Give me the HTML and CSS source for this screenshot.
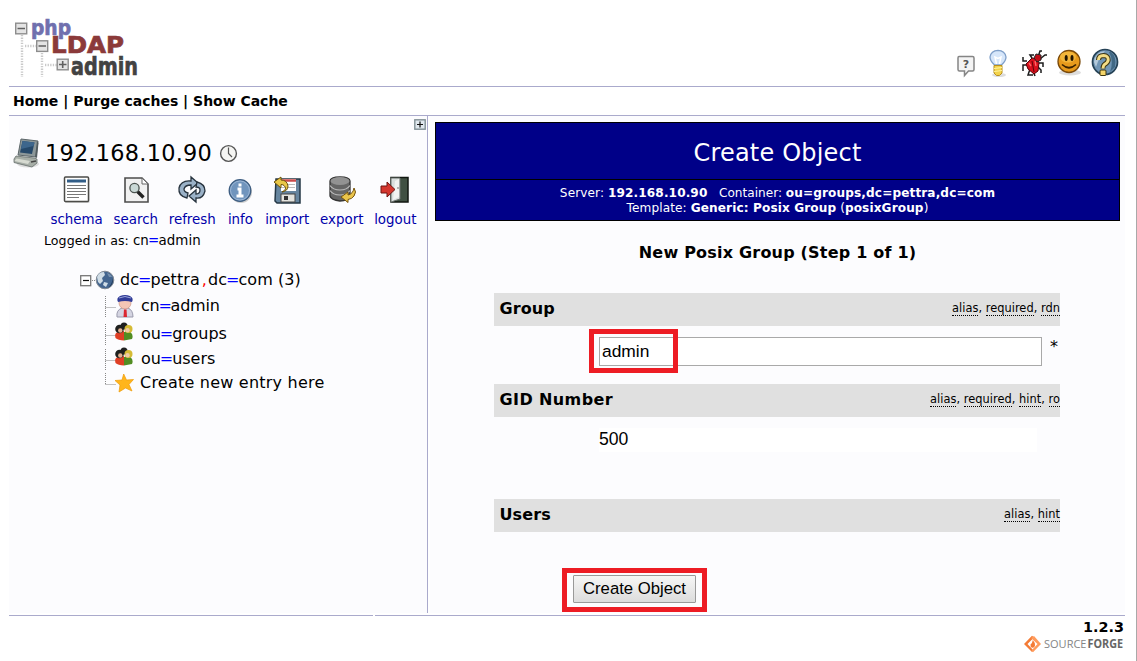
FILE: index.html
```html
<!DOCTYPE html>
<html lang="en">
<head>
<meta charset="utf-8">
<title>phpLDAPadmin</title>
<link rel="stylesheet" href="styles.css">
</head>
<body>
<div class="page">
  <header class="top">
    <svg class="logo" width="130" height="66" viewBox="0 0 130 66">
      <g stroke="#c9c9c9" stroke-width="2.4" stroke-dasharray="1.3 1.3" fill="none">
        <path d="M9 18V60"/><path d="M29 36V60"/><path d="M12 29H23"/><path d="M32 48H44"/>
      </g>
      <g fill="#e4e4e4" stroke="#8d8d8d" stroke-width="1.4">
        <rect x="2.700" y="6.200" width="11" height="10.600"/><rect x="23.700" y="23.800" width="11" height="10.600"/><rect x="44.200" y="42.200" width="11" height="10.600"/>
      </g>
      <path d="M4.500 11.500H12M25.500 29H33M46 47.500H53.500M49.700 44V51" stroke="#606060" stroke-width="1.600"/>
      <g class="logo-text">
        <text x="18" y="17.500" fill="#7070ae" stroke="#7070ae" font-size="20.500" textLength="40" lengthAdjust="spacingAndGlyphs">php</text>
        <text x="38" y="36" fill="#8b3a3a" stroke="#8b3a3a" font-size="23.500" textLength="73" lengthAdjust="spacingAndGlyphs">LDAP</text>
        <text x="58" y="57.500" fill="#424242" stroke="#424242" font-size="24.500" textLength="67" lengthAdjust="spacingAndGlyphs">admin</text>
      </g>
    </svg>
    <nav class="tools">
      <svg width="20" height="22" viewBox="0 0 20 22"><path d="M3 1.500H16.500Q18 1.500 18 3V14.500Q18 16 16.500 16H12.500L8.500 20.500V16H3.500Q2 16 2 14.500V3Q2 1.500 3 1.500Z" fill="#f4f4f4" stroke="#858585" stroke-width="1.500"/><text x="6.800" y="13" class="q">?</text></svg>
      <svg width="20" height="29" viewBox="0 0 20 29"><ellipse cx="11" cy="26" rx="7" ry="2" fill="#ddd"/><path d="M6.500 16Q2 12 2 8Q3 1.500 10 1.300Q17 1.500 18 8Q18 12 13.500 16Z" fill="#d6e6fa" stroke="#7f9fc9" stroke-width="1.3"/><path d="M8.500 15L7 8L10 9.500L13 8L11.500 15" fill="none" stroke="#fff" stroke-width="1.5"/><path d="M6 16.500H14V24L11.500 26.500H8.500L6 24Z" fill="#f3d34b" stroke="#b9901f"/><path d="M6 19.500L14 18.500M6 22.500L14 21.500" stroke="#fff3a0" stroke-width="1.200"/></svg>
      <svg width="28" height="28" viewBox="0 0 28 28"><path d="M8 12L4 12V8M9 16H4V22M11 20L9 26H14M14 22L16 27M13 9L11 6H15M19 8L21 2H23M21 10L26 6H28M20 14H24V18M19 18L22 21V24" stroke="#1c1c1c" stroke-width="1.500" fill="none"/><path d="M7 15L13 9L18 10L20 14L19 22L15 25L9 20Z" fill="#d80f1b" stroke="#510408"/><path d="M15 9L17 5L22 6L22 11L18 13Z" fill="#c20d17" stroke="#222"/><path d="M15 23L13 12" stroke="#5e050a"/><path d="M10 14L12 17M16 12L17 17" stroke="#ff6666" stroke-width="1.400"/></svg>
      <svg width="26" height="28" viewBox="0 0 26 28"><ellipse cx="14" cy="23.500" rx="11" ry="3" fill="#ddd"/><circle cx="13" cy="12.500" r="11" fill="#e79a1c" stroke="#7a4a0b" stroke-width="1.300"/><ellipse cx="12" cy="8" rx="8" ry="5.500" fill="#f2b53a"/><ellipse cx="10.200" cy="9" rx="1.500" ry="3" fill="#241500"/><ellipse cx="16" cy="9" rx="1.500" ry="3" fill="#241500"/><path d="M6 15.500Q13 22 20 15.500" stroke="#3b2200" stroke-width="1.700" fill="none"/></svg>
      <svg width="28" height="30" viewBox="0 0 28 30"><circle cx="14" cy="14" r="12.500" fill="#7196b5" stroke="#254256" stroke-width="1.700"/><path d="M3 14Q4 4 14 3Q8 9 5 19Z" fill="#b4cadb"/><path d="M20 4Q26 9 24 19L19 24Q23 13 18 4Z" fill="#416985"/><path d="M7.500 12Q7.500 7.500 12.500 7.500Q17.500 7.700 17.200 12Q17 14.500 13.500 16.500Q12 17.500 12 20.500" fill="none" stroke="#3d3511" stroke-width="5"/><rect x="9" y="22" width="6" height="5.500" rx="1" fill="#f4d56a" stroke="#3d3511"/><path d="M7.500 12Q7.500 7.500 12.500 7.500Q17.500 7.700 17.200 12Q17 14.500 13.500 16.500Q12 17.500 12 20.500" fill="none" stroke="#f4dd86" stroke-width="3"/></svg>
    </nav>
  </header>
  <nav class="menu">Home | Purge caches | Show Cache</nav>
  <main class="columns">
    <aside class="side">
      <svg class="expand" width="12" height="11" viewBox="0 0 12 11"><rect x=".8" y=".8" width="10.400" height="9.400" fill="#e0e8ee" stroke="#829096" stroke-width="1.400"/><path d="M3 5.500H9M6 2.500V8.500" stroke="#111" stroke-width="1.200"/></svg>
      <div class="server">
        <svg width="27" height="32" viewBox="0 0 27 32"><ellipse cx="15" cy="27" rx="11" ry="3.500" fill="#ddd"/><path d="M8 2L25 4L23 20L5 18Z" fill="#8d9899" stroke="#5c6669"/><path d="M9.500 4L21.500 5.500L19 17L7 15.500Z" fill="#26496a"/><path d="M9.500 4L21.500 5.500L20.500 9L8 12Z" fill="#3d668c"/><path d="M24 4L25.500 6L24 21L22 20Z" fill="#525c5f"/><path d="M3 19L21 21L24 22V26L19 30L1 25.500V22Z" fill="#a7aea7" stroke="#666e6c" stroke-width=".8"/><path d="M3.500 21.500L17 24L15 27L1.500 24Z" fill="#d6dad1"/><path d="M18 25L23 24" stroke="#444" stroke-width="1.300"/></svg>
        <h1>192.168.10.90</h1>
        <svg class="clock" width="19" height="19" viewBox="0 0 19 19"><circle cx="9.500" cy="9.500" r="7.900" fill="#f5f5f3" stroke="#555" stroke-width="1.400"/><path d="M9.500 3.500V9.500L13 13" fill="none" stroke="#555" stroke-width="1.200"/></svg>
      </div>
      <ul class="actions">
        <li><svg width="28" height="28" viewBox="0 0 28 28"><rect x="2" y="2" width="24.500" height="25" rx="1" fill="#cfcfcf"/><rect x="1.500" y="1" width="24" height="24.500" rx="1" fill="#fff" stroke="#4b4b48" stroke-width="1.500"/><path d="M4 5H23" stroke="#315d87" stroke-width="3"/><path d="M4 9.500H23M4 12.500H23M4 15.500H23M4 18.500H23M4 21.500H16" stroke="#777" stroke-width="1"/></svg>schema</li>
        <li><svg width="28" height="28" viewBox="0 0 28 28"><path d="M3 2H20L26 8V26H3Z" fill="#f1f1f1" stroke="#4c4c4c" stroke-width="1.600"/><path d="M20 2L26 8H20Z" fill="#fff" stroke="#666"/><path d="M15.500 15.500L21.500 21.500" stroke="#222" stroke-width="3.300"/><circle cx="12.500" cy="12" r="4.600" fill="#cad9d6" stroke="#4c5450" stroke-width="1.300"/></svg>search</li>
        <li><svg width="28" height="28" viewBox="0 0 28 28"><path d="M9 22Q0 20 1 12Q3 4 13 5V1L20 7L13 13V9Q7 9 6 13Q6 16 10 17Z" fill="#9ab1c7" stroke="#27333e" stroke-width="1.300"/><path d="M19 6Q27 8 27 15Q25 23 18 22V26L11 20L18 14V18Q22 18 22 14Q22 11 18 11Z" fill="#9ab1c7" stroke="#27333e" stroke-width="1.300"/></svg>refresh</li>
        <li><svg width="28" height="28" viewBox="0 0 28 28"><circle cx="15" cy="16" r="11" fill="#ccc"/><circle cx="14" cy="14.500" r="10.800" fill="#7195bd" stroke="#3d5d81" stroke-width="1.300"/><circle cx="14" cy="14.500" r="9.500" fill="none" stroke="#a8bfda" stroke-width=".8"/><path d="M14 7.500V10.500M11.500 13H14V19.500M10.500 20H17.500" stroke="#fff" stroke-width="3" fill="none"/></svg>info</li>
        <li><svg width="28" height="28" viewBox="0 0 28 28"><path d="M3 3H27V27H4L2 25Z" fill="#66859f" stroke="#243746" stroke-width="1.500"/><rect x="8" y="3" width="15" height="12" fill="#fff"/><path d="M8 4.500H23" stroke="#ca4b4b" stroke-width="2.500"/><path d="M9 8.500H22M9 11.500H22" stroke="#bbb"/><rect x="8" y="18" width="14" height="8" fill="#e4e4df" stroke="#444"/><rect x="11" y="20" width="4" height="4" fill="#333"/><path d="M9 16Q15 13 11 9.500Q10 8.500 8 8.500V12L1 6L8 1V4Q14 4 15 10Q15 15 9 16Z" fill="#e9c747" stroke="#6c520c"/></svg>import</li>
        <li><svg width="28" height="28" viewBox="0 0 28 28"><path d="M2 5Q2 1 12 1Q22 1 22 5V20Q20 25 12 25Q3 24 2 20Z" fill="#666" stroke="#333" stroke-width="1.300"/><ellipse cx="12" cy="5" rx="9.500" ry="4" fill="#929292"/><path d="M2 9.500Q5 14 12 14Q19 14 22 9.500M2 14.500Q5 19 12 19Q19 19 22 14.500" fill="none" stroke="#bbb" stroke-width="1.200"/><path d="M26 12Q29 16 26 20Q24 23 20 23.500V26.500L13 21L20 16V19Q25 18 26 12Z" fill="#ebc54b" stroke="#77550f"/></svg>export</li>
        <li><svg width="28" height="28" viewBox="0 0 28 28"><rect x="10" y="1.500" width="17" height="24.500" fill="#405042" stroke="#101610" stroke-width="1.500"/><path d="M10 2H19V23L10 26Z" fill="#d9dedd" stroke="#6a706d"/><path d="M14 5L18 3V21L12 24" fill="#f1f2f1"/><path d="M16 12H18" stroke="#777"/><path d="M0 10H6V6L14 13.500L6 21V17H0Z" fill="#d4362e" stroke="#6e1410"/></svg>logout</li>
      </ul>
      <p class="login"><span>Logged in as:</span> <span class="login-dn">cn<i class="eq">=</i>admin</span></p>
      <ul class="tree">
        <li class="root"><svg width="15" height="20" viewBox="0 0 15 20"><rect x=".7" y="5.700" width="10" height="10" fill="#fff" stroke="#777" stroke-width="1.300"/><path d="M3 10.500H9" stroke="#111" stroke-width="1.200"/><path d="M12 10.500H15" stroke="#888" stroke-dasharray="1 1"/></svg><svg class="pic" width="20" height="20" viewBox="0 0 20 20"><circle cx="10" cy="10" r="8.800" fill="#43658f" stroke="#838b94"/><path d="M2 7Q4 2 9 2L10 5L7 8L8 11L5 14L3 12ZM9 12L13 13L11 17L8 15Z" fill="#d0dde6"/><path d="M12 3Q16 4 17 7L14 7Z" fill="#7690ad"/><path d="M18 8Q19 15 13 18Q17 14 18 8Z" fill="#233d5e"/></svg><span>dc<i class="eq">=</i>pettra<b class="comma">,</b>dc<i class="eq">=</i>com (3)</span></li>
        <li class="child user"><svg width="11" height="21" viewBox="0 0 11 21"><path d="M.5 0V21M.5 11.500H11" stroke="#888" stroke-dasharray="1 1"/></svg><svg class="pic" width="20" height="24" viewBox="0 0 20 24"><path d="M2 23Q1 16 7 14H13Q18 16 18 23Z" fill="#d5d5e2" stroke="#9a9aac"/><circle cx="10" cy="9" r="6" fill="#f4c6b5" stroke="#ca9585" stroke-width=".7"/><path d="M3 8Q1 4 5 2Q10 0 15 2Q19 4 17 8Q10 6 3 8Z" fill="#303b97"/><path d="M4 4Q10 1 16 4" stroke="#9ba5da" fill="none"/><path d="M9 15.500H11.500L12 23H8.500Z" fill="#dc2731"/></svg><span>cn<i class="eq">=</i>admin</span></li>
        <li class="child group"><svg width="11" height="21" viewBox="0 0 11 21"><path d="M.5 0V21M.5 11.500H11" stroke="#888" stroke-dasharray="1 1"/></svg><svg class="pic" width="20" height="20" viewBox="0 0 20 20"><path d="M1.500 16Q0 11 4 10L10 9L10 18.500Q4 18 1.500 16Z" fill="#df3f25"/><path d="M10 18.500V10L15 9Q20 12 18 17Z" fill="#528d22"/><ellipse cx="10" cy="4" rx="3.500" ry="3.500" fill="#202020"/><circle cx="5.500" cy="7" r="4.300" fill="#1f201e"/><circle cx="14.500" cy="7" r="4" fill="#d5bb35"/><circle cx="6.300" cy="8.500" r="2.200" fill="#e3b191"/><circle cx="13.500" cy="8.200" r="2.200" fill="#efc9a6"/></svg><span>ou<i class="eq">=</i>groups</span></li>
        <li class="child group users"><svg width="11" height="21" viewBox="0 0 11 21"><path d="M.5 0V21M.5 11.500H11" stroke="#888" stroke-dasharray="1 1"/></svg><svg class="pic" width="20" height="20" viewBox="0 0 20 20"><path d="M1.500 16Q0 11 4 10L10 9L10 18.500Q4 18 1.500 16Z" fill="#df3f25"/><path d="M10 18.500V10L15 9Q20 12 18 17Z" fill="#528d22"/><ellipse cx="10" cy="4" rx="3.500" ry="3.500" fill="#202020"/><circle cx="5.500" cy="7" r="4.300" fill="#1f201e"/><circle cx="14.500" cy="7" r="4" fill="#d5bb35"/><circle cx="6.300" cy="8.500" r="2.200" fill="#e3b191"/><circle cx="13.500" cy="8.200" r="2.200" fill="#efc9a6"/></svg><span>ou<i class="eq">=</i>users</span></li>
        <li class="child create"><svg width="11" height="21" viewBox="0 0 11 21"><path d="M.5 0V12M.5 11.500H11" stroke="#888" stroke-dasharray="1 1"/></svg><svg class="pic" width="20" height="20" viewBox="0 0 20 20"><path d="M8.700 1L11.500 7L18.500 6.500L14 11.500L17 18L10.500 15L4 19L5 12L0 7.500L7 7Z" fill="#ffb51b" stroke="#ee9b09" stroke-width=".7"/></svg><span>Create new entry here</span></li>
      </ul>
    </aside>
    <section class="content">
      <div class="banner">
        <h2>Create Object</h2>
        <p><span class="soft">Server:</span> <b class="wide">192.168.10.90</b> &nbsp; <span>Container:</span> <b class="wide">ou=groups,dc=pettra,dc=com</b><br><span class="soft">Template:</span> <b class="wide">Generic: Posix Group</b> (<b class="wide">posixGroup</b>)</p>
      </div>
      <h3>New Posix Group (Step 1 of 1)</h3>
      <form class="form">
        <div class="bar"><span class="name">Group</span><span class="notes"><abbr>alias</abbr>, <abbr>required</abbr>, <abbr>rdn</abbr></span></div>
        <div class="row"><input type="text" value="admin"><span class="star">*</span><span class="mark mark-field"></span></div>
        <div class="bar"><span class="name gid-name">GID Number</span><span class="notes"><abbr>alias</abbr>, <abbr>required</abbr>, <abbr>hint</abbr>, <abbr>ro</abbr></span></div>
        <div class="gid">500</div>
        <div class="bar"><span class="name">Users</span><span class="notes"><abbr>alias</abbr>, <abbr>hint</abbr></span></div>
        <div class="submit"><button type="button">Create Object</button><span class="mark mark-button"></span></div>
      </form>
    </section>
  </main>
  <div class="rule"><span></span><span></span></div>
  <footer class="foot">
    <b>1.2.3</b>
    <svg width="102" height="18" viewBox="0 0 102 18"><path d="M9 .8L1 9L9 17L10.500 15.500L4.500 9L11 2.500Z" fill="#f47b35"/><path d="M11 1L18 9L10 17.200L8.500 15.500L14.500 9L8 3Z" fill="#ff9b5b"/><path d="M9.800 5Q12.500 8 12 10.500Q11.500 13 9.300 12.700Q7 12 7.500 9.500Q9.500 8 9.800 5Z" fill="#f47b35"/><text x="21" y="13" class="sf" fill="#858585" textLength="42.500" lengthAdjust="spacingAndGlyphs">SOURCE</text><text x="64.500" y="13" class="sf sf-b" fill="#666" textLength="35.500" lengthAdjust="spacingAndGlyphs">FORGE</text></svg>
  </footer>
</div>
</body>
</html>
```
FILE: styles.css
```css
* { box-sizing: border-box; }
body { margin: 0; background: #fff; color: #000; font-family: "DejaVu Sans", sans-serif; font-size: 16px; }
h1, h2, h3, p, ul { margin: 0; padding: 0; font-weight: normal; }
ul { list-style: none; }
svg { display: block; flex: none; overflow: visible; }
.page { width: 1137px; height: 661px; padding: 0 11px 0 9px; border-right: 1px solid #a9a9a9; overflow: hidden; }

.top { height: 87px; border-bottom: 1px solid #aaaacc; display: flex; justify-content: space-between; }
.logo { margin: 17px 0 0 4px; }
.logo-text { font-family: "DejaVu Sans", sans-serif; font-weight: bold; stroke-width: .7px; }
.tools { display: flex; align-items: center; gap: 9px; height: 36px; margin: 45px 6px 0 0; }
.tools svg:nth-child(1) { margin: 6px 3px 0 0; }
.tools svg:nth-child(2) { margin-right: 2px; }
.q { font: bold 11px "DejaVu Sans", sans-serif; fill: #555; }
.menu { height: 29px; border-bottom: 1px solid #aaaacc; padding-left: 4px; font-size: 14px; font-weight: bold; line-height: 28px; white-space: nowrap; letter-spacing: -.02px; }

.columns { display: flex; height: 497px; gap: 2px; }
.side { position: relative; width: 419px; background: #fcfcfe; border-right: 1px solid #aaaacc; white-space: nowrap; }
.expand { position: absolute; right: 1px; top: 3px; }
.server { display: flex; align-items: center; height: 32px; margin: 21px 0 0 4px; }
.server h1 { font-size: 22.4px; line-height: 32px; margin: 0 7px 0 5px; letter-spacing: .25px; }
.actions { display: flex; gap: 10.7px; margin: 7px 0 0 41.500px; font-size: 13.4px; line-height: 18px; color: #0000aa; }
.actions li { display: flex; flex-direction: column; align-items: center; gap: 7px; }
.login { margin: 3px 0 0 35px; font-size: 12.6px; line-height: 18px; }
.login span:first-child { letter-spacing: .05px; }
.login-dn { font-size: 13.4px; letter-spacing: .1px; }
.eq { font-style: normal; color: #00f; margin: 0 -.07em; }
.tree { margin-top: 19px; padding-left: 71px; line-height: 22px; }
.tree li { display: flex; align-items: center; height: 22px; }
.root span { margin-left: 5px; letter-spacing: .08px; }
.root .pic { margin-left: 0; }
.tree .comma { color: #f00; font-weight: normal; margin: 0 1px 0 2px; }
.tree .child { padding-left: 25px; }
.child .pic { margin-left: -1px; }
.child span { margin-left: 6px; }
.tree .user { margin-top: 4px; }
.user span { letter-spacing: -.2px; }
.tree .group { margin-top: 6px; }
.tree .users { margin-top: 3px; }
.group .pic { margin: -4px 0 0 -2px; }
.group span { margin-left: 7px; }
.tree .create { margin-top: 2px; }
.create .pic { margin-left: -1px; }
.create span { margin-left: 5px; letter-spacing: .22px; }

.content { width: 695px; background: #fcfcfe; padding: 6px 5px 0; }
.banner { height: 99px; background: #000088; color: #fff; border: 1px solid #000; text-align: center; }
.banner h2 { height: 57px; border-bottom: 1px solid #000; font-size: 24px; line-height: 60px; letter-spacing: .2px; }
.banner p { padding-top: 6px; font-size: 12.1px; line-height: 15px; white-space: nowrap; }
.soft { letter-spacing: .1px; }
.wide { letter-spacing: .12px; }
h3 { margin-top: 21px; height: 22px; font-size: 16px; line-height: 22px; font-weight: bold; letter-spacing: .2px; text-align: center; }
.form { width: 566px; margin: 29px 0 0 59px; }
.bar { height: 33px; padding-left: 5.5px; background: #e0e0e0; display: flex; justify-content: space-between; line-height: 31px; }
.name { font-weight: bold; letter-spacing: .1px; }
.gid-name { letter-spacing: .4px; }
.notes { font-size: 11.4px; letter-spacing: .03px; }
abbr { border-bottom: 1px dotted #000; }
.row { position: relative; height: 58px; padding: 11px 0 0 105px; display: flex; }
input { width: 443px; height: 29px; border: 1px solid #a9a9a9; padding: 0 2px; background: #fff; font: 17.4px "Liberation Sans", sans-serif; }
.star { margin-left: 8px; line-height: 20px; }
.gid { height: 24px; width: 438px; margin: 11px 0 47px 105px; background: #fff; font: 17.6px/22px "Liberation Sans", sans-serif; }
.submit { position: relative; padding: 43px 0 0 79px; }
button { display: block; width: 123px; height: 28px; padding: 0; border: 1px solid #999; border-radius: 1px; background: linear-gradient(#f6f6f6, #dcdcdc); color: #000; font: 16.7px/24px "Liberation Sans", sans-serif; }
.mark { position: absolute; border: 5px solid #ed1c24; }
.mark-field { left: 95px; top: 3px; width: 89px; height: 44px; }
.mark-button { left: 68px; top: 36px; width: 145px; height: 44px; }

.rule { margin-top: 2px; height: 1px; display: flex; gap: 2px; }
.rule span { background: #aaaacc; width: 364px; }
.rule span:last-child { width: 750px; }
.foot { display: flex; flex-direction: column; align-items: flex-end; height: 45px; font-size: 14.4px; line-height: 20px; padding: 1px 1px 0; }
.foot b { height: 18px; }
.foot svg { margin-right: -1px; }
.sf { font: 11.5px "Open Sans", sans-serif; }
.sf-b { font-weight: bold; }
```
